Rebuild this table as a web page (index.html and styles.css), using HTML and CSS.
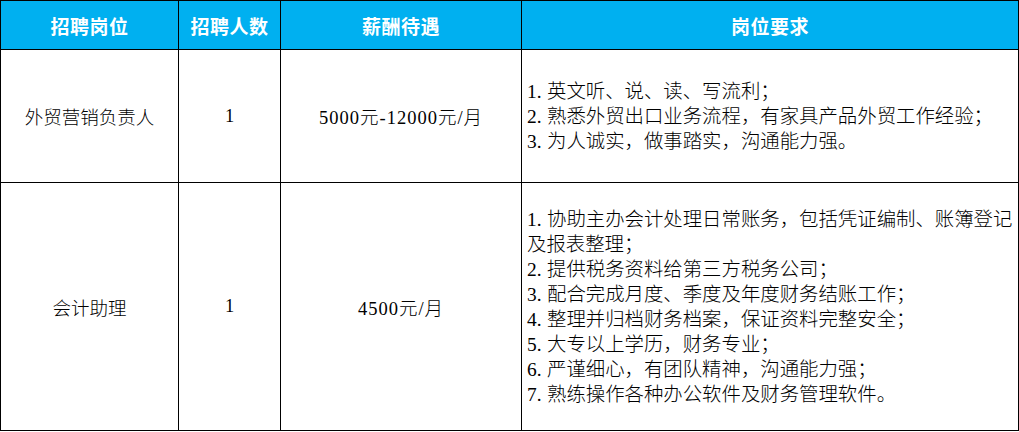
FILE: index.html
```html
<!DOCTYPE html>
<html lang="zh-CN">
<head>
<meta charset="utf-8">
<title>招聘岗位</title>
<link rel="stylesheet" href="styles.css">
</head>
<body>
<table class="jobs">
  <colgroup>
    <col class="c1"><col class="c2"><col class="c3"><col class="c4">
  </colgroup>
  <thead>
    <tr class="head">
      <th>招聘岗位</th>
      <th>招聘人数</th>
      <th>薪酬待遇</th>
      <th>岗位要求</th>
    </tr>
  </thead>
  <tbody>
    <tr class="r1">
      <td class="center">外贸营销负责人</td>
      <td class="center">1</td>
      <td class="center pay">5000元-12000元/月</td>
      <td class="req">
        <div><span class="num">1.</span>英文听、说、读、写流利；</div>
        <div><span class="num">2.</span>熟悉外贸出口业务流程，有家具产品外贸工作经验；</div>
        <div><span class="num">3.</span>为人诚实，做事踏实，沟通能力强。</div>
      </td>
    </tr>
    <tr class="r2">
      <td class="center">会计助理</td>
      <td class="center">1</td>
      <td class="center pay">4500元/月</td>
      <td class="req">
        <div><span class="num">1.</span>协助主办会计处理日常账务，包括凭证编制、账簿登记<br>及报表整理；</div>
        <div><span class="num">2.</span>提供税务资料给第三方税务公司；</div>
        <div><span class="num">3.</span>配合完成月度、季度及年度财务结账工作；</div>
        <div><span class="num">4.</span>整理并归档财务档案，保证资料完整安全；</div>
        <div><span class="num">5.</span>大专以上学历，财务专业；</div>
        <div><span class="num">6.</span>严谨细心，有团队精神，沟通能力强；</div>
        <div><span class="num">7.</span>熟练操作各种办公软件及财务管理软件。</div>
      </td>
    </tr>
  </tbody>
</table>
</body>
</html>
```

FILE: styles.css
```css
html, body {
  margin: 0;
  padding: 0;
  background: #ffffff;
}

.jobs {
  border-collapse: collapse;
  table-layout: fixed;
  width: 1018px;
  font-family: "Liberation Serif", "Noto Sans CJK SC", serif;
  color: #000000;
}

.c1 { width: 178px; }
.c2 { width: 102px; }
.c3 { width: 241px; }
.c4 { width: 497px; }

.jobs th,
.jobs td {
  border: 1px solid #000000;
  padding: 0;
}

.head {
  height: 49px;
}

.head th {
  background: #00b0f0;
  color: #ffffff;
  font-size: 19px;
  font-weight: 700;
  text-align: center;
  vertical-align: middle;
  letter-spacing: 0.5px;
}

.r1 { height: 133px; }
.r2 { height: 248px; }

.center {
  text-align: center;
  vertical-align: middle;
  font-size: 18.5px;
  font-weight: 300;
}

.pay {
  letter-spacing: 1px;
}

.req {
  text-align: left;
  vertical-align: middle;
  padding-left: 5px !important;
  font-size: 19.4px;
  font-weight: 300;
  line-height: 25px;
  white-space: nowrap;
}

.num {
  display: inline-block;
  width: 20px;
}
```
